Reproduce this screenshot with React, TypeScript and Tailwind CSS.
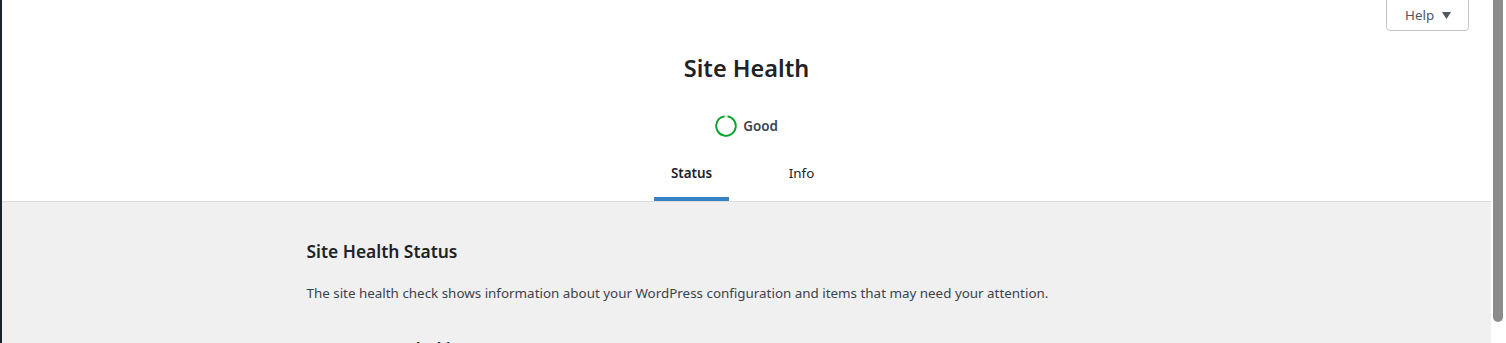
const font = { fontFamily: '"Noto Sans", "Open Sans", sans-serif' };

function HelpTab() {
  return (
    <button className="absolute -top-px right-[22px] flex h-[32px] w-[83px] items-center rounded-b-[4px] border border-[#c3c4c7] bg-white pl-[18px] text-[13.4px] text-[#50575e]">
      <span>Help</span>
      <svg className="ml-[8px]" width="9" height="7" viewBox="0 0 9 7">
        <path d="M0 0h9L4.5 7z" fill="#50575e" />
      </svg>
    </button>
  );
}

function StatusRing() {
  return (
    <svg width="22" height="22" viewBox="0 0 22 22">
      <circle cx="11" cy="11" r="9.8" fill="none" stroke="#dcdcde" strokeWidth="1.8" />
      <circle
        cx="11"
        cy="11"
        r="9.8"
        fill="none"
        stroke="#00a32a"
        strokeWidth="1.8"
        strokeDasharray="58 62"
        transform="rotate(-80 11 11)"
      />
    </svg>
  );
}

export default function App() {
  return (
    <div className="flex h-[343px] overflow-hidden bg-white text-[#3c434a]" style={font}>
      <div className="w-[2px] shrink-0 bg-[#1d2327]" />

      <main className="flex min-w-0 flex-1 flex-col bg-[#f0f0f1]">
        {/* Header */}
        <div className="relative border-b border-[#dcdcde] bg-white">
          <HelpTab />
          <div className="flex flex-col items-center pt-[54px]">
            <h1 className="text-[23.5px] font-semibold leading-[29px] text-[#1d2327]">Site Health</h1>
            <div className="mt-[32px] flex h-[22px] items-center gap-[6px]">
              <StatusRing />
              <span className="text-[13.4px] font-semibold text-[#3c434a]">Good</span>
            </div>
            <nav className="mt-[27px] flex gap-[35px]">
              <a className="w-[75px] border-b-4 border-[#3582c4] pb-[15px] text-center text-[13.4px] font-semibold leading-[18px] text-[#1d2327]">
                Status
              </a>
              <a className="w-[75px] border-b-4 border-transparent pb-[15px] text-center text-[13.4px] leading-[18px] text-[#1d2327]">
                Info
              </a>
            </nav>
          </div>
        </div>

        {/* Body */}
        <div className="mx-auto w-[880px] pt-[37px]">
          <h2 className="text-[17.4px] font-semibold leading-[24px] text-[#1d2327]">Site Health Status</h2>
          <p className="mt-[20px] text-[13.4px] leading-[20px] text-[#3c434a]">
            The site health check shows information about your WordPress configuration and items that may need your attention.
          </p>
          <h3 className="mt-[35px] text-[17px] font-semibold leading-[24px] text-[#1d2327]">1 recommended improvement</h3>
        </div>
      </main>

      {/* Scrollbar */}
      <div className="w-[15px] shrink-0 bg-white pl-[2px]">
        <div className="h-[322px] w-[10px] rounded-b-full bg-[#8b8b8b]" />
      </div>
    </div>
  );
}
